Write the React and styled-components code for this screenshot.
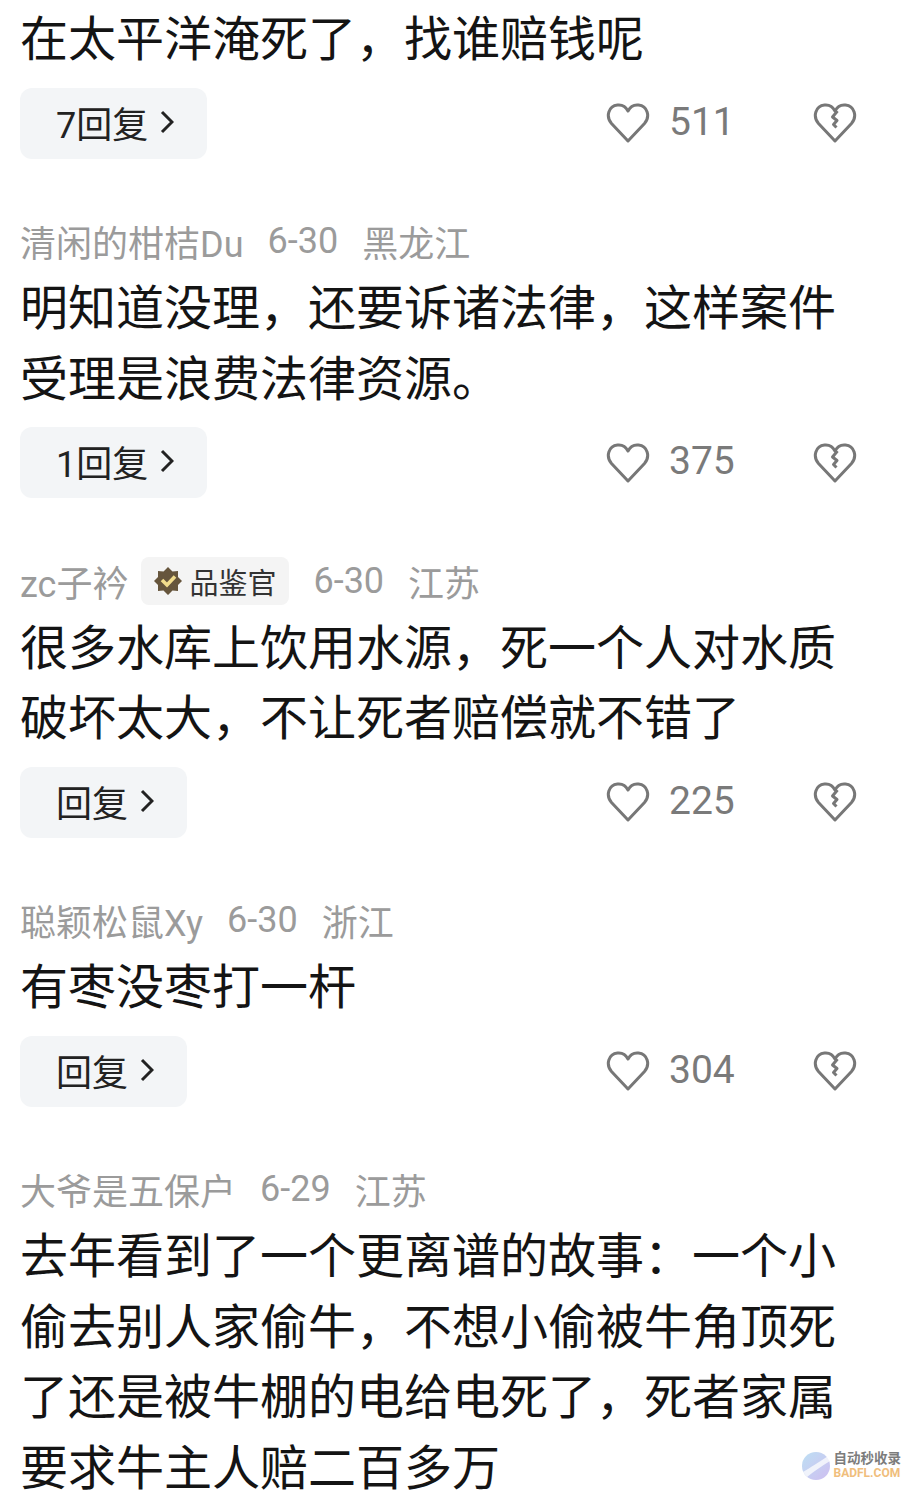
import React from 'react';
import styled, { createGlobalStyle } from 'styled-components';

const comments = [
  { id: 1, lines: ['在太平洋淹死了，找谁赔钱呢'], reply: '7回复', likes: 511 },
  {
    id: 2,
    name: '清闲的柑桔Du',
    date: '6-30',
    place: '黑龙江',
    lines: ['明知道没理，还要诉诸法律，这样案件', '受理是浪费法律资源。'],
    reply: '1回复',
    likes: 375,
  },
  {
    id: 3,
    name: 'zc子衿',
    badge: '品鉴官',
    date: '6-30',
    place: '江苏',
    lines: ['很多水库上饮用水源，死一个人对水质', '破坏太大，不让死者赔偿就不错了'],
    reply: '回复',
    likes: 225,
  },
  {
    id: 4,
    name: '聪颖松鼠Xy',
    date: '6-30',
    place: '浙江',
    lines: ['有枣没枣打一杆'],
    reply: '回复',
    likes: 304,
  },
  {
    id: 5,
    name: '大爷是五保户',
    date: '6-29',
    place: '江苏',
    lines: [
      '去年看到了一个更离谱的故事：一个小',
      '偷去别人家偷牛，不想小偷被牛角顶死',
      '了还是被牛棚的电给电死了，死者家属',
      '要求牛主人赔二百多万',
    ],
  },
];

const HEART = 'M22 39 L5.5 21.5 C-0.5 14.5 2.5 4 11.5 3 C16 2.5 20 5 22 9 C24 5 28 2.5 32.5 3 C41.5 4 44.5 14.5 38.5 21.5 Z';

const Heart = ({ broken }) => (
  <HeartSvg viewBox="0 0 44 42">
    <path d={HEART} />
    {broken && <path d="M24.5 9 L19.5 15 L24 18.5 L20.5 22.5 L23.5 25.5" />}
  </HeartSvg>
);

const App = () => (
  <Page>
    <GlobalStyle />
    {comments.map((c) => (
      <Comment key={c.id}>
        {c.name && (
          <Meta>
            <span>{c.name}</span>
            {c.badge && (
              <Badge>
                <svg width="28" height="28" viewBox="0 0 28 28">
                  <path
                    d="M14 0 L18.5 4.5 L24 4 L24 10 L28 14 L24 18 L24 24 L18.5 23.5 L14 28 L9.5 23.5 L4 24 L4 18 L0 14 L4 10 L4 4 L9.5 4.5 Z"
                    fill="#66553c"
                  />
                  <path d="M8 13 L13 18 L21 9.5" fill="none" stroke="#f2dc8c" strokeWidth="3.6" />
                </svg>
                {c.badge}
              </Badge>
            )}
            <span>{c.date}</span>
            <span>{c.place}</span>
          </Meta>
        )}
        <Body>
          {c.lines.map((line) => (
            <Line key={line}>{line}</Line>
          ))}
        </Body>
        {c.reply && (
          <Actions>
            <ReplyButton>
              {c.reply}
              <svg width="14" height="24" viewBox="0 0 14 24">
                <path d="M2 2 L12 12 L2 22" fill="none" stroke="#222" strokeWidth="3" />
              </svg>
            </ReplyButton>
            <Likes>
              <Heart />
              <Count>{c.likes}</Count>
              <Dislike>
                <Heart broken />
              </Dislike>
            </Likes>
          </Actions>
        )}
      </Comment>
    ))}
    <Watermark>
      <svg width="30" height="30" viewBox="0 0 30 30">
        <defs>
          <linearGradient id="wm" x1="0" y1="0" x2="1" y2="1">
            <stop offset="0" stopColor="#9fd2ee" />
            <stop offset="1" stopColor="#b9a0ea" />
          </linearGradient>
        </defs>
        <circle cx="15" cy="15" r="14" fill="url(#wm)" opacity="0.8" />
        <path d="M2 21 C10 16 17 12 27 5 L29 10 C21 15 13 20 6 26 Z" fill="#fff" opacity="0.75" />
      </svg>
      <WatermarkText>
        <span>自动秒收录</span>
        <WatermarkUrl>BADFL.COM</WatermarkUrl>
      </WatermarkText>
    </Watermark>
  </Page>
);

const GlobalStyle = createGlobalStyle`
  html, body {
    margin: 0;
    background: #fff;
  }
`;

const Page = styled.div`
  position: relative;
  width: 922px;
  height: 1507px;
  overflow: hidden;
  box-sizing: border-box;
  padding: 5px 20px 0;
  background: #fff;
  font-family: Roboto, "Noto Sans CJK SC", sans-serif;
`;

const Comment = styled.div`
  display: flex;
  flex-direction: column;
  margin-bottom: 57.5px;
`;

const Meta = styled.div`
  display: flex;
  align-items: center;
  gap: 24px;
  height: 50px;
  margin-bottom: 8px;
  font-size: 36px;
  color: #9b9b9b;
  white-space: nowrap;
`;

const Badge = styled.span`
  display: flex;
  align-items: center;
  gap: 7px;
  height: 48px;
  margin-left: -11px;
  padding: 0 13px;
  border-radius: 8px;
  background: #f4f4f4;
  font-size: 29px;
  color: #333;
`;

const Body = styled.div`
  display: flex;
  flex-direction: column;
`;

const Line = styled.div`
  height: 70.5px;
  line-height: 70px;
  font-size: 48px;
  color: #141414;
  white-space: nowrap;
`;

const Actions = styled.div`
  display: flex;
  align-items: center;
  justify-content: space-between;
  margin-top: 12px;
  padding-right: 45px;
`;

const ReplyButton = styled.div`
  display: flex;
  align-items: center;
  gap: 12px;
  box-sizing: border-box;
  height: 71px;
  padding: 0 33px 3px 36px;
  border-radius: 12px;
  background: #f3f5f7;
  font-size: 36px;
  color: #222;
`;

const Likes = styled.div`
  display: flex;
  align-items: center;
`;

const Count = styled.span`
  width: 144px;
  margin-left: 19px;
  padding-bottom: 3px;
  font-size: 39px;
  color: #7a7a7a;
`;

const Dislike = styled.span`
  display: flex;
`;

const HeartSvg = styled.svg`
  display: block;
  width: 44px;
  height: 42px;
  fill: none;
  stroke: #777;
  stroke-width: 3;
  stroke-linejoin: round;
`;

const Watermark = styled.div`
  position: absolute;
  right: 21px;
  bottom: 26px;
  display: flex;
  align-items: center;
  gap: 3px;
  opacity: 0.85;
`;

const WatermarkText = styled.div`
  display: flex;
  flex-direction: column;
  font-size: 13.5px;
  line-height: 15px;
  font-weight: 700;
  color: #666;
`;

const WatermarkUrl = styled.span`
  font-size: 12px;
  color: #eeb366;
`;

export default App;
